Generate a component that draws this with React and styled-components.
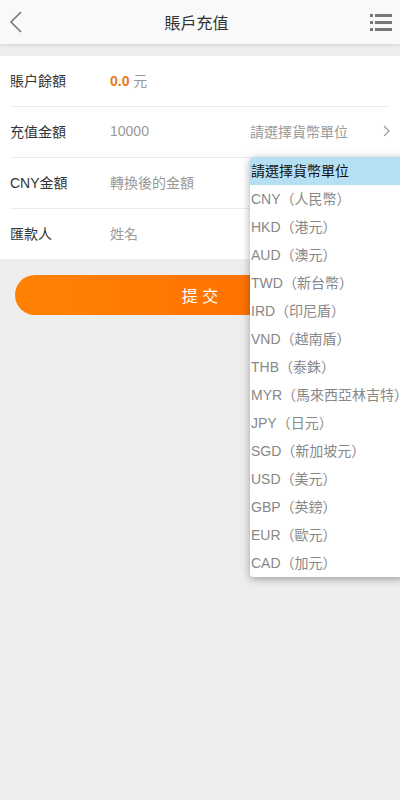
import React from "react"
import styled, { createGlobalStyle } from "styled-components"

const GlobalStyle = createGlobalStyle`
  html, body {
    margin: 0;
    padding: 0;
    background: #efeeee;
    font-family: "Liberation Sans", "Noto Sans CJK TC", sans-serif;
  }
`

const currencies = [
  "CNY（人民幣）",
  "HKD（港元）",
  "AUD（澳元）",
  "TWD（新台幣）",
  "IRD（印尼盾）",
  "VND（越南盾）",
  "THB（泰銖）",
  "MYR（馬來西亞林吉特）",
  "JPY（日元）",
  "SGD（新加坡元）",
  "USD（美元）",
  "GBP（英鎊）",
  "EUR（歐元）",
  "CAD（加元）",
]

const App = () => (
  <Page>
    <GlobalStyle />
    <Header>
      <IconButton aria-label="back">
        <svg width="14" height="22" viewBox="0 0 14 22">
          <path d="M12 1 L2 11 L12 21" fill="none" stroke="#777" strokeWidth="1.6" />
        </svg>
      </IconButton>
      <Title>賬戶充值</Title>
      <IconButton aria-label="menu">
        <svg width="22" height="18" viewBox="0 0 22 18">
          <g fill="#777">
            <rect x="0" y="1" width="3" height="3" />
            <rect x="5" y="1" width="17" height="3" />
            <rect x="0" y="8" width="3" height="3" />
            <rect x="5" y="8" width="17" height="3" />
            <rect x="0" y="15" width="3" height="3" />
            <rect x="5" y="15" width="17" height="3" />
          </g>
        </svg>
      </IconButton>
    </Header>

    <Form>
      <Row>
        <Label>賬户餘額</Label>
        <Value>
          <Amount>0.0</Amount> 元
        </Value>
      </Row>
      <Row>
        <Label>充值金額</Label>
        <Value>10000</Value>
        <Picker>
          請選擇貨幣單位
          <svg width="8" height="12" viewBox="0 0 8 12">
            <path d="M1 1 L6 6 L1 11" fill="none" stroke="#999" strokeWidth="1.2" />
          </svg>
        </Picker>
      </Row>
      <Row>
        <Label>CNY金額</Label>
        <Value>轉換後的金額</Value>
      </Row>
      <Row last>
        <Label>匯款人</Label>
        <Value>姓名</Value>
      </Row>
      <Dropdown>
        <Option selected>請選擇貨幣單位</Option>
        {currencies.map((c) => (
          <Option key={c}>{c}</Option>
        ))}
      </Dropdown>
    </Form>

    <ButtonWrap>
      <Submit>提 交</Submit>
    </ButtonWrap>
  </Page>
)

export default App

const Page = styled.div`
  width: 400px;
  min-height: 800px;
  background: #efeeee;
`

const Header = styled.div`
  height: 44px;
  background: #f9f9f9;
  box-shadow: 0 1px 4px rgba(0, 0, 0, 0.12);
  display: flex;
  align-items: center;
  justify-content: space-between;
  padding: 0 8px 0 9px;
  position: relative;
  z-index: 2;
`

const IconButton = styled.div`
  display: flex;
  align-items: center;
`

const Title = styled.div`
  font-size: 16px;
  color: #333;
`

const Form = styled.div`
  margin-top: 12px;
  background: #fff;
  padding: 0 10px;
  position: relative;
`

const Row = styled.div`
  display: flex;
  align-items: center;
  border-bottom: ${(p) => (p.last ? "none" : "1px solid #ebebeb")};
  font-size: 14px;
  padding-bottom: 2px;
  box-sizing: border-box;
  height: ${(p) => (p.last ? "50px" : "51px")};
`

const Label = styled.div`
  width: 100px;
  color: #333;
`

const Value = styled.div`
  flex: 1;
  color: #999;
`

const Amount = styled.span`
  color: #e8791c;
  font-weight: bold;
`

const Picker = styled.div`
  display: flex;
  align-items: center;
  gap: 35px;
  color: #999;
  margin-right: -1px;
`

const Dropdown = styled.div`
  position: absolute;
  left: 250px;
  top: 101px;
  width: 156px;
  background: #fff;
  border-radius: 4px;
  box-shadow: 0 2px 8px rgba(0, 0, 0, 0.35);
  overflow: hidden;
  z-index: 5;
`

const Option = styled.div`
  height: 28px;
  line-height: 28px;
  font-size: 14px;
  white-space: nowrap;
  padding-left: 1px;
  color: ${(p) => (p.selected ? "#111" : "#888")};
  background: ${(p) => (p.selected ? "#b5e0f4" : "#fff")};
`

const ButtonWrap = styled.div`
  padding: 16px 15px;
`

const Submit = styled.button`
  width: 100%;
  height: 40px;
  border: none;
  border-radius: 20px;
  background: linear-gradient(90deg, #ff8204, #ff6a00);
  color: #fff;
  font-size: 16px;
  font-family: "Liberation Sans", "Noto Sans CJK TC", sans-serif;
  letter-spacing: 0;
`
